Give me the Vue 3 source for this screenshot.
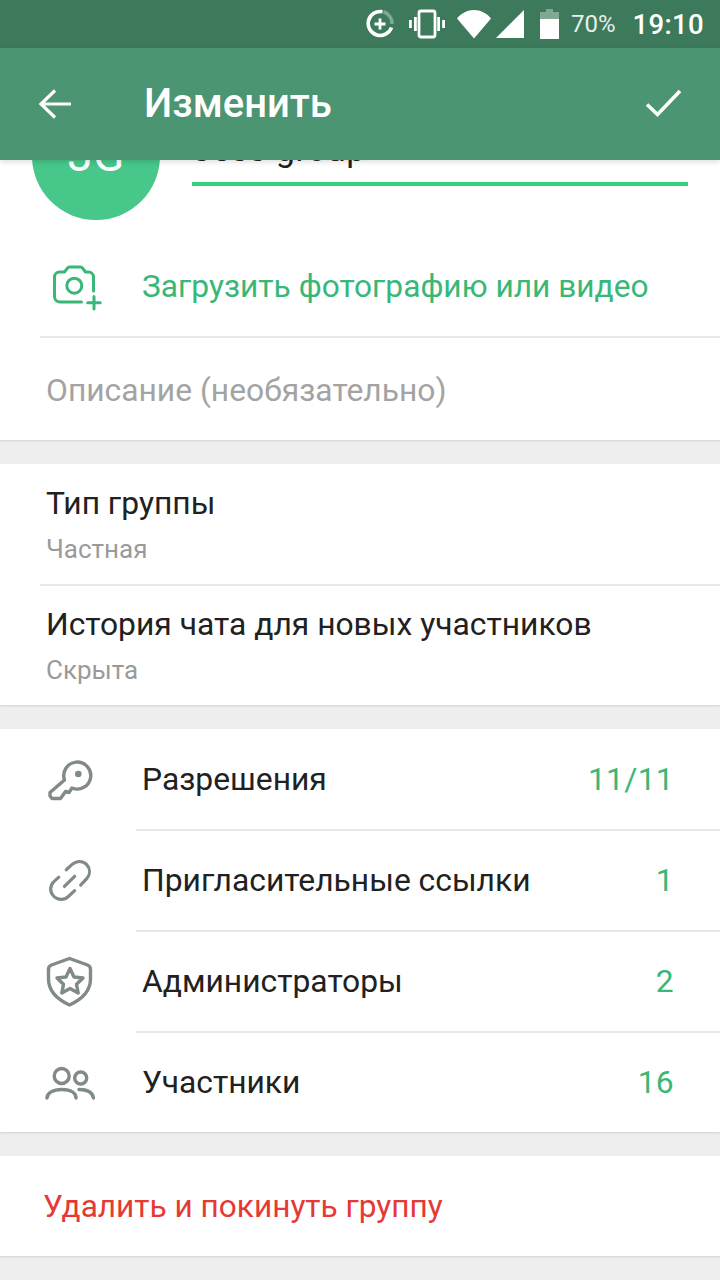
<template>
  <div class="page">
    <div class="statusbar">
      <svg class="st-data" width="30" height="30" viewBox="0 0 30 30">
        <path d="M17.500 2.700A12 12 0 1 0 26.500 18.500" fill="none" stroke="#fff" stroke-width="3.600" />
        <path d="M18.500 2.800A12 12 0 0 1 27 15" fill="none" stroke="#fff" stroke-opacity=".35" stroke-width="3.600" />
        <path d="M15 9.500v11M9.500 15h11" stroke="#fff" stroke-width="2.800" />
      </svg>
      <svg class="st-vib" width="36" height="30" viewBox="0 0 36 30">
        <rect x="10" y="2" width="16" height="26" rx="2" fill="none" stroke="#fff" stroke-width="2.800" />
        <path d="M5 8h2.800v14H5zM28.200 8H31v14h-2.800zM0 11h2.800v8H0zM33.200 11H36v8h-2.800z" fill="#fff" />
      </svg>
      <svg class="st-wifi" width="34" height="30" viewBox="0 0 34 30">
        <path d="M17 29.500L0 9.500C4.500 4 10.500 1 17 1s12.500 3 17 8.500z" fill="#fff" />
      </svg>
      <svg class="st-signal" width="28" height="30" viewBox="0 0 28 30">
        <path d="M28 1v28H0z" fill="#fff" />
      </svg>
      <svg class="st-bat" width="19" height="30" viewBox="0 0 19 30">
        <path d="M6 0h7v3h6v8H0V3h6z" fill="#fff" fill-opacity=".35" />
        <path d="M0 10h19v20H0z" fill="#fff" />
      </svg>
      <span class="st-pct">70%</span>
      <span class="st-time">19:10</span>
    </div>
    <header class="toolbar">
      <svg width="36" height="36" viewBox="0 0 36 36" class="back">
        <path d="M34 18H5M18 4.500L4 18l14 13.500" fill="none" stroke="#fff" stroke-width="3.200" />
      </svg>
      <h1>Изменить</h1>
      <svg width="40" height="32" viewBox="0 0 40 32" class="check">
        <path d="M3 16.500L13.500 26.500 36 3" fill="none" stroke="#fff" stroke-width="3.600" />
      </svg>
    </header>

    <main class="scroller">
      <div class="content">
        <section class="card first">
          <div class="group-row">
            <div class="avatar">JG</div>
            <div class="name-field">
              <div class="name">Jess group</div>
            </div>
          </div>
          <div class="upload">
            <svg width="60" height="50" viewBox="0 0 60 50">
              <path d="M36.500 41H15a5.500 5.500 0 0 1-5.500-5.500V16a5 5 0 0 1 5-5h5l3-4a3 3 0 0 1 2-1h11a3 3 0 0 1 2 1l3 4h3a5 5 0 0 1 5 5v14" fill="none" stroke="#39b777" stroke-width="3" stroke-linecap="round" />
              <circle cx="29.300" cy="24.700" r="7.500" fill="none" stroke="#39b777" stroke-width="3" />
              <path d="M49 35.500v12.500M42.700 41.700h12.500" stroke="#39b777" stroke-width="3" stroke-linecap="round" />
            </svg>
            <span>Загрузить фотографию или видео</span>
          </div>
          <div class="descr">Описание (необязательно)</div>
        </section>

        <section class="card">
          <div class="setting">
            <div class="setting-title">Тип группы</div>
            <div class="setting-sub">Частная</div>
          </div>
          <div class="setting divided">
            <div class="setting-title">История чата для новых участников</div>
            <div class="setting-sub">Скрыта</div>
          </div>
        </section>

        <section class="card">
          <div v-for="item in items" :key="item.label" class="item">
            <div class="item-icon">
              <svg width="52" height="52" viewBox="0 0 52 52" fill="none" stroke="#808a87" stroke-width="3.400" stroke-linecap="round" stroke-linejoin="round" v-html="item.icon"></svg>
            </div>
            <div class="item-body">
              <span class="item-label">{{ item.label }}</span>
              <span class="item-count">{{ item.count }}</span>
            </div>
          </div>
        </section>

        <section class="card danger">Удалить и покинуть группу</section>
      </div>
    </main>
  </div>
</template>

<script setup>
const items = [
  {
    label: 'Разрешения',
    count: '11/11',
    icon: '<path d="M6 39.500L20.500 27A13.500 13.500 0 1 1 28 35l-3 4.500-3.500-1-5 7H8L6 43z"/><circle cx="34.300" cy="21" r="1.600" fill="#808a87"/>',
  },
  {
    label: 'Пригласительные ссылки',
    count: '1',
    icon: '<g transform="translate(1.800 1.800) scale(.93)"><path d="M22 15l6-5.500c5-4.500 12-4.500 16 0s4 10.500 0 15L37.500 31.500"/><path d="M14 23l-5 4.500c-5 4.500-5 11.500-.5 16s11.500 4.500 15.500.5l7-6.500"/><path d="M20 33l11-11"/></g>',
  },
  {
    label: 'Администраторы',
    count: '2',
    icon: '<path d="M25.500 3.500L43.500 10c2.500 1 3 2 3 4.500V24c0 11.500-8 20-21 26C12.500 44 4.500 35.500 4.500 24v-9.500c0-2.500.5-3.500 3-4.500z"/><path d="M26 13.500l4 8.500 9 1-6.500 6.300 1.700 8.700-8.200-4.500-8.200 4.500 1.700-8.700L13 23l9-1z"/>',
  },
  {
    label: 'Участники',
    count: '16',
    icon: '<circle cx="17.700" cy="20" r="7.500"/><circle cx="36.700" cy="22" r="6"/><path d="M3 42c0-5 6-8.500 15-8.500S32 37 32 42"/><path d="M35 33.500c8 0 13.500 2.500 14.500 8.500"/>',
  },
]
</script>

<style scoped>
.page {
  width: 720px;
  height: 1280px;
  display: flex;
  flex-direction: column;
  overflow: hidden;
  background: #eeeeee;
  font-family: Roboto, "Noto Sans", sans-serif;
  color: #212121;
}

.statusbar {
  height: 48px;
  flex: none;
  display: flex;
  align-items: center;
  background: #3d7a5c;
  color: #fff;
  padding-left: 365px;
}

.st-vib { margin-left: 14px; }
.st-wifi { margin-left: 12px; }
.st-signal { margin-left: 5px; }
.st-bat { margin-left: 16px; }

.st-pct {
  margin-left: 12px;
  font-size: 24px;
  font-weight: 400;
  color: #e6f0eb;
}

.st-time {
  margin-left: 17px;
  font-size: 27.500px;
  font-weight: 500;
  letter-spacing: 0.3px;
}

.toolbar {
  height: 112px;
  flex: none;
  display: flex;
  align-items: center;
  position: relative;
  z-index: 2;
  background: #4c9572;
  box-shadow: 0 2px 5px rgba(0, 0, 0, 0.14);
  padding: 0 36px 0 37px;
}

.toolbar h1 {
  flex: 1;
  margin: 0 0 0 71px;
  color: #fff;
  font-size: 40px;
  font-weight: 500;
  line-height: 1;
}

.scroller {
  flex: 1;
  overflow: hidden;
}

.content {
  margin-top: -68px;
}

.card {
  background: #fff;
  margin-bottom: 24px;
  box-shadow: 0 1px 2px rgba(0, 0, 0, 0.12);
}

.group-row {
  display: flex;
  padding: 0 32px;
  height: 144px;
}

.avatar {
  width: 128px;
  height: 128px;
  flex: none;
  border-radius: 50%;
  background: #47c78a;
  color: #fff;
  font-size: 46px;
  font-weight: 400;
  line-height: 126px;
  text-align: center;
}

.name-field {
  flex: 1;
  margin-left: 32px;
  height: 90px;
  border-bottom: 4px solid #34d27e;
  display: flex;
  align-items: flex-end;
}

.name {
  font-size: 34px;
  line-height: 40px;
  padding-bottom: 13px;
  padding-left: 1px;
  letter-spacing: 0.5px;
}

.upload {
  height: 102px;
  box-sizing: border-box;
  margin-left: 40px;
  border-bottom: 2px solid #e8e8e8;
  display: flex;
  align-items: center;
  color: #39b777;
  font-size: 31.700px;
}

.upload svg {
  margin-left: 5px;
  margin-right: 37px;
}

.descr {
  height: 100px;
  padding: 2px 0 0 46px;
  display: flex;
  align-items: center;
  color: #a3a3a3;
  font-size: 31.800px;
}

.setting {
  height: 120px;
  padding: 20px 0 0 46px;
  box-sizing: border-box;
}

.setting.divided {
  margin-left: 40px;
  padding: 19px 0 0 6px;
  height: 121px;
  border-top: 2px solid #e8e8e8;
}

.setting-title {
  font-size: 31.800px;
  line-height: 38px;
}

.setting-sub {
  margin-top: 12px;
  font-size: 26px;
  line-height: 30px;
  color: #9a9a9a;
}

.item {
  height: 101px;
  display: flex;
}

.item:first-child {
  height: 100px;
}

.item-icon {
  width: 136px;
  flex: none;
  display: flex;
  align-items: center;
  padding-left: 44px;
  box-sizing: border-box;
}

.item-body {
  flex: 1;
  display: flex;
  align-items: center;
  justify-content: space-between;
  padding: 0 46px 2px 6px;
  border-top: 2px solid #e8e8e8;
  font-size: 31.800px;
}

.item:first-child .item-body {
  border-top: none;
  padding-bottom: 0;
}

.item-count {
  color: #39b777;
  letter-spacing: 0.3px;
}

.danger {
  height: 100px;
  display: flex;
  align-items: center;
  padding-left: 43px;
  color: #e53935;
  font-size: 31.600px;
}
</style>
